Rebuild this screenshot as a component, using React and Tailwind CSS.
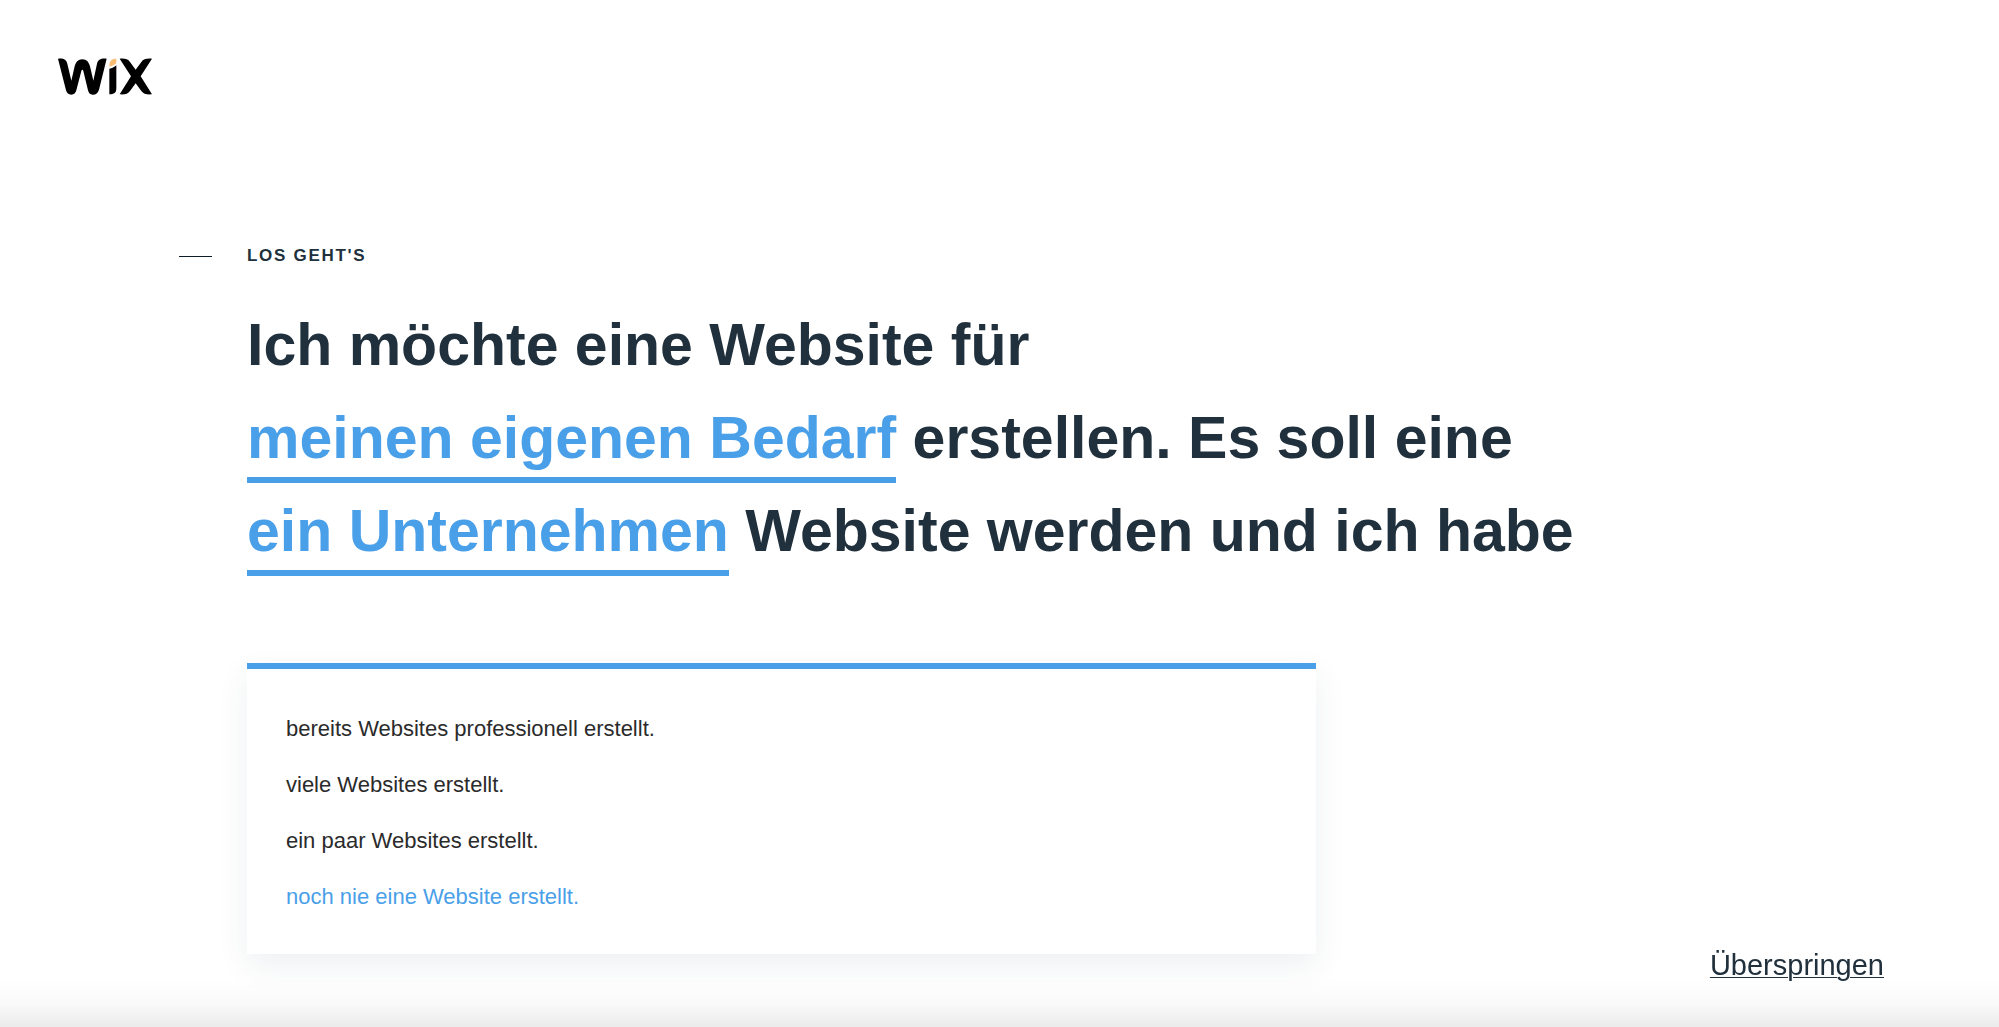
import { useState } from 'react';

const OPTIONS = [
  'bereits Websites professionell erstellt.',
  'viele Websites erstellt.',
  'ein paar Websites erstellt.',
  'noch nie eine Website erstellt.',
];

function WixLogo() {
  return (
    <svg viewBox="54 54 282 109" className="block w-[94px] h-[37px]" aria-hidden="true">
      <path d="M54 55C70 53 79 57 82 70L94 121L103 82C107 65 114 57 127 57C140 57 147 65 151 82L160 121L171 70C174 57 184 53 200 55L177 148C173 160 166 163 158 163C150 163 146 158 144 150L130 92C129 87 125 87 124 92L109 150C107 158 102 163 94 163C86 163 80 158 78 150Z" />
      <path d="M208 85C216 84 223 81 229 75V144C229 158 222 162 208 162Z" />
      <path d="M229 55V65C229 73 219 75 208 79C208 62 213 55 229 55Z" fill="#fbbd71" />
      <path d="M239 55C255 54 264 56 270 65L287 88L304 65C310 56 320 54 336 55L302 108L336 162C320 163 310 161 304 152L287 129L270 152C264 161 255 163 239 162L273 108Z" />
    </svg>
  );
}

function Choice({ children }) {
  return (
    <button type="button" className="pb-[2px] border-b-[6px] border-[#4a9fe9] text-[#4a9fe9] leading-[74px] cursor-pointer">
      {children}
    </button>
  );
}

export default function App() {
  const [selected, setSelected] = useState(3);

  return (
    <div className="relative min-h-screen flex flex-col bg-white text-[#20303c] font-['Liberation_Sans',Arial,sans-serif]">
      <header className="pt-[58px] px-[58px]">
        <a href="#" aria-label="Wix" className="inline-block text-black">
          <WixLogo />
        </a>
      </header>

      <main className="pt-[142px] pl-[247px] pr-[115px]">
        <div className="-ml-[68px] flex items-center gap-[35px]">
          <span className="w-[33px] h-px bg-[#0c1c28]" />
          <p className="text-[17px] leading-6 font-bold uppercase tracking-widest">Los geht's</p>
        </div>

        <h1 className="mt-[31px] text-[59px] leading-[93px] font-bold">
          <span className="block">Ich möchte eine Website für</span>
          <span className="block">
            <Choice>meinen eigenen Bedarf</Choice> erstellen. Es soll eine
          </span>
          <span className="block">
            <Choice>ein Unternehmen</Choice> Website werden und ich habe
          </span>
        </h1>

        <ul className="mt-[85px] max-w-[1069px] border-t-[6px] border-[#4a9fe9] bg-white pt-8 pb-[29px] px-[39px] shadow-[0_12px_30px_rgba(32,60,90,0.08)]">
          {OPTIONS.map((label, i) => (
            <li key={label}>
              <button
                type="button"
                aria-pressed={selected === i}
                onClick={() => setSelected(i)}
                className={`block w-full text-left text-[22px] leading-[56px] cursor-pointer ${
                  selected === i ? 'text-[#4a9fe9]' : 'text-[#2b2b2b]'
                }`}
              >
                {label}
              </button>
            </li>
          ))}
        </ul>
      </main>

      {/* fade along the lower edge of the window */}
      <div className="fixed inset-x-0 bottom-0 h-12 bg-linear-to-b from-transparent via-black/2 to-black/8 pointer-events-none" />

      <a href="#" className="fixed right-[115px] bottom-[44px] text-[29px] leading-9 underline underline-offset-2 decoration-1">
        Überspringen
      </a>
    </div>
  );
}
